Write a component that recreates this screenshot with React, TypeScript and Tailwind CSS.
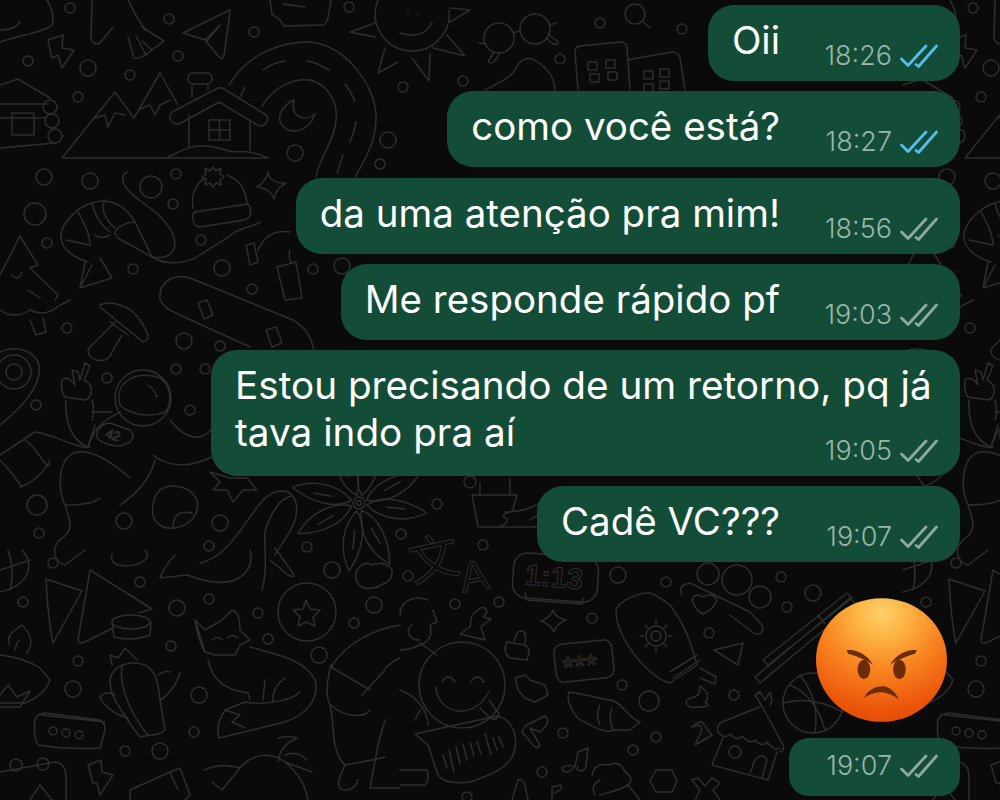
const messages = [
  { text: "Oii", time: "18:26", read: true },
  { text: "como você está?", time: "18:27", read: true },
  { text: "da uma atenção pra mim!", time: "18:56", read: false },
  { text: "Me responde rápido pf", time: "19:03", read: false },
];

const outlines = [
  // top left
  "M0 42C20 35 45 32 52 25C55 15 50 5 47 0M0 30Q15 30 20 22",
  "M92 0L91 38Q93 46 100 43L113 27M128 0C135 15 140 22 145 30M142 27L164 41L152 50L142 41M128 37L134 58Q140 60 152 50M136 36L146 55",
  "M230 10L183 33L205 40L220 58Q223 60 224 55L230 12M205 40L220 25L207 41",
  "M270 0L272 14L280 20L284 26L322 25Q327 24 328 18L331 0M283 4L305 7",
  "M48 40L63 35L62 48L74 50L62 68L58 55L52 58Z",
  // sun
  "M378 0A37 37 0 1 0 449 10M450 8L470 10L450 22M447 35L465 56L433 48M412 58L429 81L430 54M350 32L375 23M350 32L375 37M378 73L385 48M378 73L398 62M400 33Q425 40 432 22M408 13V14M418 14V15",
  // glasses, magnifier, blob, buildings
  "M513 33L520 31M486 44L479 43M494 52L488 62Q491 64 494 62L500 53M548 34L558 42Q558 45 553 44L546 38M550 25L556 23",
  "M643 22L650 28",
  "M485 90C500 82 510 78 515 70C522 55 532 55 545 68C552 75 555 82 555 90",
  "M578 90L575 52Q575 47 580 46L620 42Q626 42 627 48L630 90M627 60L672 52Q678 52 680 58L685 90",
  "M588 62H597V70H588ZM606 60H615V68H606ZM590 74H599V82H590ZM608 72H617V80H608ZM644 71H653V79H644ZM660 69H669V77H660ZM644 84H653V92H644ZM660 81H669V89H660Z",
  // mountain and house
  "M62 158L115 92L134 118L160 73L178 105M62 158H268M95 118L105 115L108 127L115 113L125 115M138 110L150 105L155 115L160 105L170 100",
  "M172 112L218 88Q222 87 226 90L266 115Q270 120 264 125Q260 127 256 124L219 102L181 123Q174 126 170 119Q169 115 172 112M189 115V147M250 120V150M167 158C180 150 195 145 205 146C215 146 225 150 232 152C245 150 255 152 268 158",
  "M209 120H230V140H209ZM219.5 120V140M209 130H230M192 97V85M208 90V84",
  "M229 85C250 50 285 42 310 42C345 45 375 85 376 115C377 140 365 160 355 177M262 106C275 85 295 78 310 80C330 85 338 105 336 120C335 140 318 160 316 177",
  "M263 70Q272 63 285 61M307 61Q318 63 329 70M345 84Q351 92 355 101M356 122Q354 133 350 142M343 155Q340 165 337 173M245 87L240 97",
  "M294 100C282 105 276 118 282 125C290 135 308 133 315 114C305 122 290 118 294 100",
  // cabin
  "M0 85L18 79L50 98M0 104H48M0 118H46M0 148L55 143M12 113H34V135H12Z",
  // shrimp, beanie, sparkle, tree, hammer, board
  "M152 257L135 222C125 205 110 198 95 202C75 207 60 225 61 238C62 250 75 258 88 262M152 257L118 238Q112 234 118 228C122 225 128 222 135 222M78 212C85 225 90 235 90 245M92 204C95 215 100 225 110 232M105 200C100 208 105 220 115 228M66 240L90 245M85 262L80 288L112 278L100 258M80 288L92 265M95 235Q100 240 110 235",
  "M152 257C165 265 185 265 200 255C215 245 225 240 235 232C250 225 258 225 260 222M172 232C160 210 135 200 128 190C120 180 122 175 127 172M152 257C170 260 180 250 172 232",
  "M195 225Q190 215 195 212L248 204Q252 208 250 216Q248 219 244 220L200 227Q197 227 195 225M193 208C190 190 200 180 206 178M227 175C240 180 246 190 247 204",
  "M213 167L216 171L221 168L220 174L224 177L220 180L221 185L216 183L213 187L210 183L205 185L206 180L202 177L206 174L205 168L210 171Z",
  "M268 172Q270 184 286 183Q276 188 274 199Q270 188 257 187Q266 182 268 172Z",
  "M0 275L20 236L38 265L30 268L58 295L55 300M12 275Q18 282 22 272M28 290L40 298",
  "M246 245L254 243L258 262L250 265ZM258 250C265 235 275 230 290 232M277 267L296 262L302 298L285 300ZM290 250Q288 258 291 262",
  "M160 300C158 278 180 272 195 280L293 320Q310 330 314 350M160 300C165 310 175 312 180 315L250 347",
  "M198 303L207 300L213 315L204 319ZM266 330L276 327L282 343L272 347Z",
  // mushroom, palm, avocado
  "M100 305C110 300 130 305 140 320C150 335 150 340 143 342L100 307M115 322L92 345C85 350 88 358 97 360C105 362 110 358 112 352L122 335M110 322L128 335",
  "M30 320L36 335L46 332L43 318M0 310Q15 320 30 310Q45 318 60 305Q65 303 70 300",
  "M0 352C15 345 35 350 39 365C42 385 25 405 0 425",
  // astronaut
  "M75 385L72 370L78 372L80 380L85 363L90 366L84 380C95 385 92 398 85 400L65 397Q60 390 62 380Q68 375 75 385",
  "M66 400C65 420 70 440 88 447L95 425M92 400Q95 412 92 420M92 412L112 412",
  "M120 405C113 380 140 370 160 378C172 385 172 405 165 412C150 418 130 415 120 405M148 385Q155 390 157 397",
  "M120 412C105 420 95 425 88 447M170 420C180 433 190 438 200 437C206 435 210 432 212 428M0 455L35 432C50 433 80 450 90 447M153 455C165 465 185 470 212 457M155 460C150 480 135 495 120 505",
  "M130 478C110 460 85 445 70 455C58 465 58 490 65 505C70 520 75 530 60 540C50 550 55 562 65 565M65 505C80 505 95 503 100 498M65 565L85 550M25 440C40 450 45 470 50 465M50 460Q40 480 20 487M0 460C15 475 20 485 22 487",
  "M97 432Q102 423 110 423L130 430Q136 436 130 442L120 446Q105 446 97 438Z",
  // star, rock, whale
  "M210 472L230 478L247 478L257 490L243 490L233 502L227 490L213 490L220 482Z",
  "M160 490C170 483 190 485 197 500C200 515 190 525 175 528C160 530 150 520 153 505C155 497 155 495 160 490M173 527C173 515 180 510 192 513",
  "M200 563C225 558 240 530 255 510C265 495 275 490 285 491C298 495 298 510 295 520C290 535 280 545 275 555M265 531C272 510 280 498 292 496M265 531C264 550 268 570 262 590M275 548L294 575Q293 578 288 575L270 560M250 550Q255 570 235 580C220 586 200 580 187 575L160 578Q165 565 175 555",
  // pot
  "M472 495L478 527H540M472 495H517L512 512Q505 512 503 517Q510 518 505 524L499 527M505 512C525 512 540 505 550 495M530 520Q540 512 550 515M480 495V483M510 495V478",
  // tent, candle, cactus, fox
  "M46 579L82 591L53 643Q48 620 46 579M90 570L152 609L138 613M90 570L78 640Q78 645 85 642L113 628M112 622L114 637Q131 642 150 635L151 622",
  "M10 645C5 635 15 630 22 625C32 635 33 645 27 653M15 650Q17 640 20 640M0 655Q25 658 40 668L50 680Q45 695 25 703H0M0 695L8 685L17 697L30 691L20 707H0",
  "M110 680C112 665 130 660 145 665C155 670 158 680 160 700L165 730Q160 735 150 735L140 737Q130 725 115 700Q110 690 110 680M122 665C118 690 135 720 148 735M160 700C170 695 178 680 180 673M158 675Q165 670 170 672M128 718C115 715 103 705 100 697Q105 690 115 695M112 665L110 655L118 658L125 648L132 655L137 660",
  "M195 620L205 630L222 620L232 610Q240 612 240 630L250 640L240 645L235 655L215 655L205 652ZM195 620Q198 640 205 652M212 640Q218 635 222 640M228 638Q232 633 238 638",
  "M250 647C280 655 305 660 315 680C320 700 305 715 285 722L219 738Q215 725 225 710L245 702M208 660C212 680 225 690 248 693L250 700M265 680L263 700M285 678C275 685 272 695 273 702M300 692C290 702 260 705 245 702M225 710L240 715L232 722L245 728",
  "M306 600L310 609L320 610L313 617L315 626L306 622L298 626L300 617L293 610L303 609Z",
  // box, lightning, jar, strawberry, calendar, globe
  "M35 720L38 715L45 713L100 720Q105 722 105 730L100 748Q70 750 38 745Q33 735 35 720M42 715L105 722",
  "M88 765L101 760L102 772L113 775L100 795L97 783L93 783Z",
  "M130 800V790L170 772L178 790M170 772L180 768L190 795L185 800",
  "M204 770Q222 762 240 768L222 790L212 782M278 738Q290 735 297 738Q280 745 278 762M285 755Q297 750 307 760M285 762L312 772M240 768C250 755 270 750 285 762C300 775 305 785 308 800",
  "M0 772L55 762Q65 763 66 775L66 800M30 800L40 785L52 800",
  "M22 550C35 565 30 585 0 592M0 570L30 560M8 550Q15 570 10 590",
  "M357 570Q365 560 372 565Q385 560 392 570Q393 580 385 583Q370 592 360 586Q353 578 357 570M112 555Q110 562 118 565Q135 568 145 560Q150 555 145 550",
  // person
  "M400 625C370 630 345 645 331 667L370 690M331 665C327 680 325 695 330 705C335 725 330 750 345 765C360 762 375 760 385 757M331 705C345 718 365 718 370 710M385 670L362 695M385 720L378 745L370 788H400M345 765C338 780 335 790 345 790Q355 790 358 780M385 668Q395 660 400 658M400 690C415 695 428 710 428 725M415 720L420 710M400 770H427Q430 780 425 785H400",
  "M428 600C415 595 400 600 400 615M433 610L437 622L430 625Q434 640 420 645Q410 650 400 650M412 625C405 630 408 640 420 640",
  "M420 643L437 655",
  // smiley and voice note
  "M442 682Q448 672 455 682M471 682Q477 672 484 682M436 687C436 710 470 725 489 692M480 708L490 718Q497 722 499 714L489 700",
  "M415 734L497 716C515 720 518 740 514 752C510 768 490 775 470 782Q445 785 438 775L428 745Z",
  "M443 755L447 768M449 750L454 772M456 746L460 764M463 744L467 760M470 742L474 756M477 741L481 754M485 733L491 755M493 738L497 750M499 737L503 747",
  // lock, blob, sparkle, apple core
  "M507 642L524 645Q530 647 529 652L527 660L510 658Q505 655 505 648ZM514 642Q516 630 522 631Q527 632 525 644",
  "M515 678L525 675L530 680L545 685L548 695L535 702L525 698L518 690Z",
  "M553 610Q555 618 566 620Q556 624 554 632Q550 624 541 621Q550 618 553 610Z",
  "M480 608Q486 606 487 612L483 617L491 619L481 627L485 640L460 634L470 627L472 615Z",
  // tube and things around
  "M616 610C620 600 640 592 650 593Q655 594 670 605C685 625 690 640 697 665L670 683C655 680 630 655 620 630C618 625 616 620 616 610M670 672L697 655M673 678L700 660M700 668L716 677L715 684L700 678",
  "M656 620V624M672 636H668M644 636H640M656 652V648M645 625L648 628M667 625L664 628M645 647L648 644M667 647L664 644",
  "M700 686Q712 695 705 702Q715 708 690 707Q680 700 695 697Q700 695 700 686",
  "M569 692C590 695 605 700 610 700C620 700 630 720 640 722L630 730L615 730C605 735 590 725 585 722C575 720 565 700 569 692M600 705Q595 715 600 725M612 708Q608 718 613 730",
  "M682 595Q677 585 690 583L750 612L762 625Q765 635 755 634L730 615M692 600Q695 592 703 597Q712 592 717 600Q715 608 703 614Q695 610 692 600",
  "M743 643L714 650L738 665Z",
  "M763 660L847 593L852 598L768 665ZM755 677L850 598L855 604L760 683ZM818 615L825 624",
  "M783 703Q812 695 843 712M800 675Q820 700 815 732M790 685Q815 695 825 730",
  "M525 726L545 716Q552 722 540 732L530 728L540 745Q537 750 533 745L522 732Z",
  "M692 727L700 725L702 730L695 745L712 735L702 722Q697 722 692 727",
  // house by the reply
  "M718 732Q716 725 722 722L762 706L783 745Q785 750 780 752M718 732Q725 740 730 734Q737 742 742 736Q750 745 755 740Q762 748 767 742Q775 752 780 748M723 738L712 765L768 780L777 752M750 773L755 760Q762 752 767 760L762 778M762 706L755 695L760 692L765 700L770 692L772 700L770 706",
  // bottom row
  "M575 767L578 752L588 748L586 765M563 767Q560 770 566 772Q572 771 574 767Q570 764 563 767M578 766Q575 770 581 771Q586 770 586 765",
  "M552 800V787L561 785Q563 790 554 793",
  "M592 775Q595 762 608 765Q620 760 625 772Q635 778 628 785C620 790 610 792 600 795M600 780Q590 785 595 795M628 785L640 800",
  "M650 781L656 770L672 770L677 781L672 792L656 792Z",
  "M692 780L698 778L705 786L712 778L720 783L713 790L720 800M692 780L700 790L695 800",
  "M512 800L518 780Q522 778 525 785L528 800",
];

const circles = [
  [70, 8, 5], [169, 19, 5], [254, 32, 5], [349, 7, 5], [178, 56, 5], [28, 61, 5], [88, 68, 8], [130, 75, 5], [78, 97, 5],
  [295, 153, 8], [388, 140, 8], [380, 164, 5], [44, 177, 8], [90, 181, 8], [151, 187, 11], [176, 174, 5], [173, 204, 5],
  [35, 214, 11], [47, 243, 5], [201, 240, 5], [222, 268, 8], [133, 269, 5], [252, 289, 5], [313, 269, 5], [342, 266, 8],
  [600, 23, 5], [682, 29, 5], [560, 59, 5], [463, 81, 5], [403, 87, 5], [499, 38, 15], [535, 29, 15], [635, 14, 10],
  [14, 372, 17], [14, 372, 8], [143, 398, 28], [67, 328, 5], [184, 341, 8], [220, 346, 5], [176, 369, 5], [205, 369, 5],
  [107, 378, 5], [190, 410, 5], [36, 405, 5], [37, 505, 10], [124, 521, 8], [39, 533, 5], [437, 504, 5], [220, 523, 8],
  [209, 546, 5], [307, 547, 5], [332, 570, 8], [401, 534, 5], [483, 545, 5], [408, 576, 5], [470, 482, 6], [359, 503, 6], [359, 503, 2.5],
  [53, 563, 5], [23, 602, 5], [140, 582, 5], [177, 608, 8], [209, 599, 5], [258, 613, 5], [374, 605, 8], [354, 623, 5],
  [268, 639, 5], [319, 655, 8], [171, 646, 5], [78, 661, 5], [73, 689, 8], [199, 695, 8], [194, 732, 5], [160, 751, 8], [125, 751, 5],
  [307, 612, 29], [53, 731, 4], [66, 733, 4], [79, 735, 4], [50, 107, 7], [52, 121, 7], [55, 136, 7], [16, 765, 6], [43, 764, 6],
  [618, 575, 8], [666, 582, 5], [781, 577, 5], [455, 604, 5], [499, 602, 5], [592, 618, 5], [709, 633, 5], [787, 607, 5], [622, 685, 5],
  [649, 701, 10], [734, 695, 5], [563, 733, 5], [656, 737, 5], [633, 750, 5], [542, 772, 5], [467, 797, 5], [462, 685, 43],
  [656, 636, 10], [656, 636, 5], [708, 574, 11], [737, 580, 15], [760, 597, 11], [735, 752, 6], [813, 593, 8], [813, 703, 30],
];

const petals = [-20, 15, 70, 105, 160, 200, 255, 290];

function Doodles() {
  return (
    <g id="tile">
      {outlines.map((d, i) => (
        <path key={i} d={d} />
      ))}
      {circles.map(([cx, cy, r], i) => (
        <circle key={i} cx={cx} cy={cy} r={r} />
      ))}
      {petals.map((a) => (
        <g key={a} transform={`translate(359 503) rotate(${a})`}>
          <path d="M8 0C20 -14 45 -16 68 -8C50 8 25 10 8 0M28 -3L46 -6" />
        </g>
      ))}
      <rect x="188" y="73" width="24" height="11" rx="5" />
      <rect x="513" y="555" width="85" height="45" rx="14" transform="rotate(4 555 577)" />
      <rect x="555" y="642" width="58" height="38" rx="8" transform="rotate(-6 584 661)" />
      <path d="M525 593L527 600L582 604L583 598" />
      <ellipse cx="131" cy="622" rx="19" ry="7" />
      <g className="[font-family:'Liberation_Sans',sans-serif]" strokeWidth="1">
        <text x="525" y="587" fontSize="29" fontWeight="700" transform="rotate(5 555 577)">1:13</text>
        <text x="106" y="440" fontSize="13" transform="rotate(18 115 435)">42</text>
        <text x="562" y="676" fontSize="30" transform="rotate(-6 584 661)">***</text>
        <text x="459" y="590" fontSize="42" transform="rotate(-10 475 570)">A</text>
      </g>
      <text x="408" y="577" fontSize="50" strokeWidth="1" transform="rotate(-12 433 555)" className="[font-family:'Noto_Sans_CJK_SC',sans-serif]">文</text>
    </g>
  );
}

function Ticks({ read }: { read: boolean }) {
  return (
    <svg width="38" height="24" viewBox="0 0 38 24" fill="none" strokeWidth="2.8" strokeLinecap="round" strokeLinejoin="round" className={read ? "stroke-[#55bdec]" : "stroke-[#8fa99f]"}>
      <path d="M1.5 15L8 21.5L26 2" />
      <path d="M16 20.5L18.5 22.5L36.5 2" />
    </svg>
  );
}

function Meta({ time, read }: { time: string; read: boolean }) {
  return (
    <div className="flex items-center justify-end gap-2 text-[27px] leading-[28px] font-light text-[#9ab5aa]">
      <span>{time}</span>
      <Ticks read={read} />
    </div>
  );
}

function AngryFace() {
  return (
    <svg width="131" height="124" viewBox="108 55 394 372">
      <defs>
        <radialGradient id="skin" cx="0.5" cy="0.12" r="0.95">
          <stop offset="0" stopColor="#ffd06a" />
          <stop offset="0.2" stopColor="#fdb544" />
          <stop offset="0.5" stopColor="#f8821f" />
          <stop offset="0.85" stopColor="#ea5208" />
          <stop offset="1" stopColor="#e04a05" />
        </radialGradient>
      </defs>
      <ellipse cx="305" cy="241" rx="197" ry="186" fill="url(#skin)" />
      <g fill="#6e2b08">
        <path d="M200 212C222 206 262 222 280 256C260 240 225 228 205 222Z" />
        <path d="M411 212C389 206 349 222 331 256C351 240 386 228 406 222Z" />
        <ellipse cx="252" cy="269" rx="19" ry="29" />
        <ellipse cx="359" cy="269" rx="19" ry="29" />
        <path d="M252 356C266 326 294 318 314 320C335 325 350 343 357 360C340 346 325 340 305 338C285 338 265 345 252 356Z" />
      </g>
    </svg>
  );
}

export default function App() {
  return (
    <div className="relative w-[1000px] h-[800px] overflow-hidden bg-[#0a0a0a] [font-family:Inter,sans-serif]">
      <svg className="absolute inset-0" width="1000" height="800" fill="none" stroke="#2e2e2e" strokeWidth="1.5" strokeLinecap="round" strokeLinejoin="round">
        <Doodles />
        <use href="#tile" x="903" />
      </svg>

      <div className="relative flex flex-col items-end gap-[10.3px] pt-[5px] pr-10">
        {messages.map((m) => (
          <div key={m.time} className="flex h-[76px] rounded-[26px] bg-[#134d37] pt-3 pb-[11px] pl-6 pr-[22px] text-white">
            <p className="text-[38.5px] leading-[47px]">{m.text}</p>
            <div className="self-end w-[158px]">
              <Meta time={m.time} read={m.read} />
            </div>
          </div>
        ))}

        <div className="flex flex-col justify-between h-[126px] w-[749px] rounded-[26px] bg-[#134d37] pt-3 pb-[11px] pl-6 pr-[22px] text-white">
          <p className="text-[38.7px] leading-[47px] -mb-6">
            Estou precisando de um retorno, pq já
            <br />
            tava indo pra aí
          </p>
          <Meta time="19:05" read={false} />
        </div>

        <div className="flex h-[76px] rounded-[26px] bg-[#134d37] pt-3 pb-[11px] pl-6 pr-[22px] text-white">
          <p className="text-[38.5px] leading-[47px]">Cadê VC???</p>
          <div className="self-end w-[158px]">
            <Meta time="19:07" read={false} />
          </div>
        </div>

        <div className="mt-[25px] mr-[13px]">
          <AngryFace />
        </div>

        <div className="mt-[6px] w-[171px] rounded-[20px] bg-[#134d37] pt-[14px] pb-[16px] pr-[22px]">
          <Meta time="19:07" read={false} />
        </div>
      </div>
    </div>
  );
}
